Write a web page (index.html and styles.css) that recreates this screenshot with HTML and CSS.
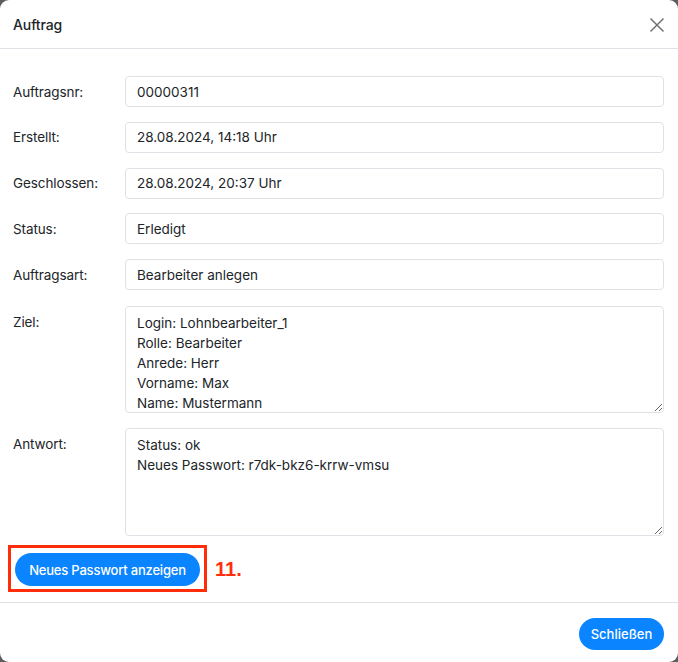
FILE: index.html
```html
<!DOCTYPE html>
<html lang="de">
<head>
<meta charset="utf-8">
<title>Auftrag</title>
<link rel="stylesheet" href="styles.css">
</head>
<body>
<div class="modal">
  <div class="modal-header">
    <h5 class="modal-title">Auftrag</h5>
    <button class="btn-close" aria-label="Close">
      <svg width="16" height="16" viewBox="0 0 16 16"><path d="M1.5 1.5 L14.5 14.5 M14.5 1.5 L1.5 14.5" stroke="#6f7276" stroke-width="1.5" fill="none"/></svg>
    </button>
  </div>
  <div class="modal-body">
    <div class="form-row">
      <label class="form-label">Auftragsnr:</label>
      <div class="form-control">00000311</div>
    </div>
    <div class="form-row">
      <label class="form-label">Erstellt:</label>
      <div class="form-control">28.08.2024, 14:18 Uhr</div>
    </div>
    <div class="form-row">
      <label class="form-label">Geschlossen:</label>
      <div class="form-control">28.08.2024, 20:37 Uhr</div>
    </div>
    <div class="form-row">
      <label class="form-label">Status:</label>
      <div class="form-control">Erledigt</div>
    </div>
    <div class="form-row">
      <label class="form-label">Auftragsart:</label>
      <div class="form-control">Bearbeiter anlegen</div>
    </div>
    <div class="form-row form-row-top">
      <label class="form-label">Ziel:</label>
      <textarea class="form-textarea" readonly>Login: Lohnbearbeiter_1
Rolle: Bearbeiter
Anrede: Herr
Vorname: Max
Name: Mustermann</textarea>
    </div>
    <div class="form-row form-row-top">
      <label class="form-label">Antwort:</label>
      <textarea class="form-textarea tall" readonly>Status: ok
Neues Passwort: r7dk-bkz6-krrw-vmsu</textarea>
    </div>
    <div class="action-row">
      <div class="marked">
        <button class="btn btn-primary btn-show">Neues Passwort anzeigen</button>
        <span class="mark-box"></span>
      </div>
      <span class="step">11.</span>
    </div>
  </div>
  <div class="modal-footer">
    <button class="btn btn-primary">Schließen</button>
  </div>
</div>
</body>
</html>
```

FILE: styles.css
```css
* { box-sizing: border-box; }
html, body { margin: 0; padding: 0; }
body {
  background: #5d5d60;
  font-family: Inter, "Noto Sans", "Liberation Sans", sans-serif;
  color: #212529;
  font-size: 14px;
  width: 678px;
  height: 662px;
  overflow: hidden;
}
.modal {
  width: 678px;
  height: 662px;
  background: #fff;
  border-radius: 9px;
  display: flex;
  flex-direction: column;
}
.modal-header {
  height: 49px;
  border-bottom: 1px solid #dee2e6;
  display: flex;
  align-items: center;
  justify-content: space-between;
  padding: 0 13px 0 13px;
}
.modal-title {
  margin: 0;
  font-size: 14px;
  font-weight: 500;
  letter-spacing: -0.1px;
}
.btn-close {
  border: 0;
  background: none;
  padding: 0;
  width: 16px;
  height: 16px;
  display: flex;
  margin-top: 1px;
}
.modal-body {
  flex: 1;
  padding: 27px 14px 0 13px;
  display: flex;
  flex-direction: column;
}
.form-row {
  display: grid;
  grid-template-columns: 112px 1fr;
  align-items: center;
  margin-bottom: 14.8px;
}
.form-row-top { align-items: start; margin-top: 0.8px; margin-bottom: 14.5px; }
.form-row-top .form-label { padding-top: 6px; }
.form-label {
  font-size: 13.5px;
  line-height: 20px;
  color: #212529;
  letter-spacing: -0.1px;
}
.form-control {
  height: 31px;
  border: 1px solid #dee2e6;
  border-radius: 4px;
  padding: 0 11px;
  display: flex;
  align-items: center;
  font-size: 13.5px;
}
.form-textarea {
  display: block;
  width: 100%;
  height: 107px;
  border: 1px solid #dee2e6;
  border-radius: 4px;
  padding: 6px 11px;
  font-family: inherit;
  font-size: 13.5px;
  line-height: 20px;
  color: #212529;
  resize: vertical;
  outline: none;
  overflow: hidden;
}
.form-textarea.tall { height: 108px; }
.action-row {
  display: flex;
  align-items: center;
  margin-top: 2.5px;
  margin-left: 2px;
}
.marked { position: relative; display: flex; }
.mark-box {
  position: absolute;
  left: -7px;
  top: -8px;
  right: -7px;
  bottom: -6px;
  border: 3px solid #ff2d0a;
  pointer-events: none;
}
.btn {
  border: 0;
  border-radius: 17px;
  font-family: inherit;
  font-size: 13px;
  font-weight: 500;
  color: #fff;
  padding: 0;
  height: 33px;
  white-space: nowrap;
}
.btn-primary { background: #0a84ff; }
.btn-show { width: 185px; letter-spacing: -0.2px; }
.step {
  color: #ff2d0a;
  font-weight: 700;
  font-size: 20px;
  margin-left: 15px;
  font-family: "Liberation Sans", Arial, sans-serif;
}
.modal-footer {
  height: 60px;
  border-top: 1px solid #dee2e6;
  display: flex;
  align-items: center;
  justify-content: flex-end;
  padding: 0 14px 0 0;
}
.modal-footer .btn { width: 85px; height: 32px; margin-top: 2px; }
```
